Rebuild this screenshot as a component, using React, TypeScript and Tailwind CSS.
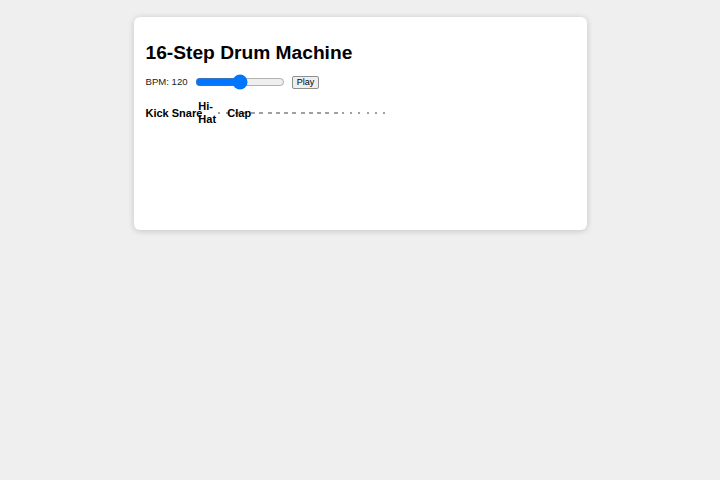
import React from "react";

// 21 visible marks: the step cells collapse into a thin dotted strip
const marks: number[] = [2, ...Array(14).fill(4), ...Array(6).fill(2)];

export default function App() {
  return (
    <div
      className="min-h-[480px] w-full bg-[#efefef] pt-[17px]"
      style={{ fontFamily: '"Liberation Sans", Arial, sans-serif' }}
    >
      <div className="mx-auto h-[213px] w-[453px] rounded-md bg-white px-3 pt-[25px] shadow-[0_1px_6px_rgba(0,0,0,0.18)]">
        <h1 className="h-[22px] text-[19.2px] font-bold leading-[22px] text-black">
          16-Step Drum Machine
        </h1>

        <div className="mt-[8px] flex h-[20px] items-center">
          <span className="text-[9.6px] text-[#222]">BPM: 120</span>
          <input
            type="range"
            min={60}
            max={180}
            defaultValue={120}
            className="ml-[7px] h-[14px] w-[90px] accent-[#0075ff]"
          />
          <button className="ml-[7px] flex h-[13px] items-center rounded-[2px] border border-[#8f8f8f] bg-[#efefef] px-[4px] text-[9px] leading-none text-black">
            Play
          </button>
        </div>

        <div className="mt-[8px] flex h-[26px] items-center text-[11px] font-bold leading-[13px] text-black">
          <span>Kick</span>
          <span className="ml-[3px]">Snare</span>
          <span className="-ml-[4px] w-[20px]">Hi-Hat</span>
          <span className="relative z-10 ml-[9px]">Clap</span>
          <div className="-ml-[33px] flex items-center">
            {marks.map((w, i) => (
              <div key={i} className="flex w-[8.25px] items-center">
                <div
                  className={
                    w === 4
                      ? "h-[2px] w-[4px] bg-[#a0a0a0]"
                      : "h-[2px] w-[2px] bg-[#a0a0a0]"
                  }
                />
              </div>
            ))}
          </div>
        </div>
      </div>
    </div>
  );
}
